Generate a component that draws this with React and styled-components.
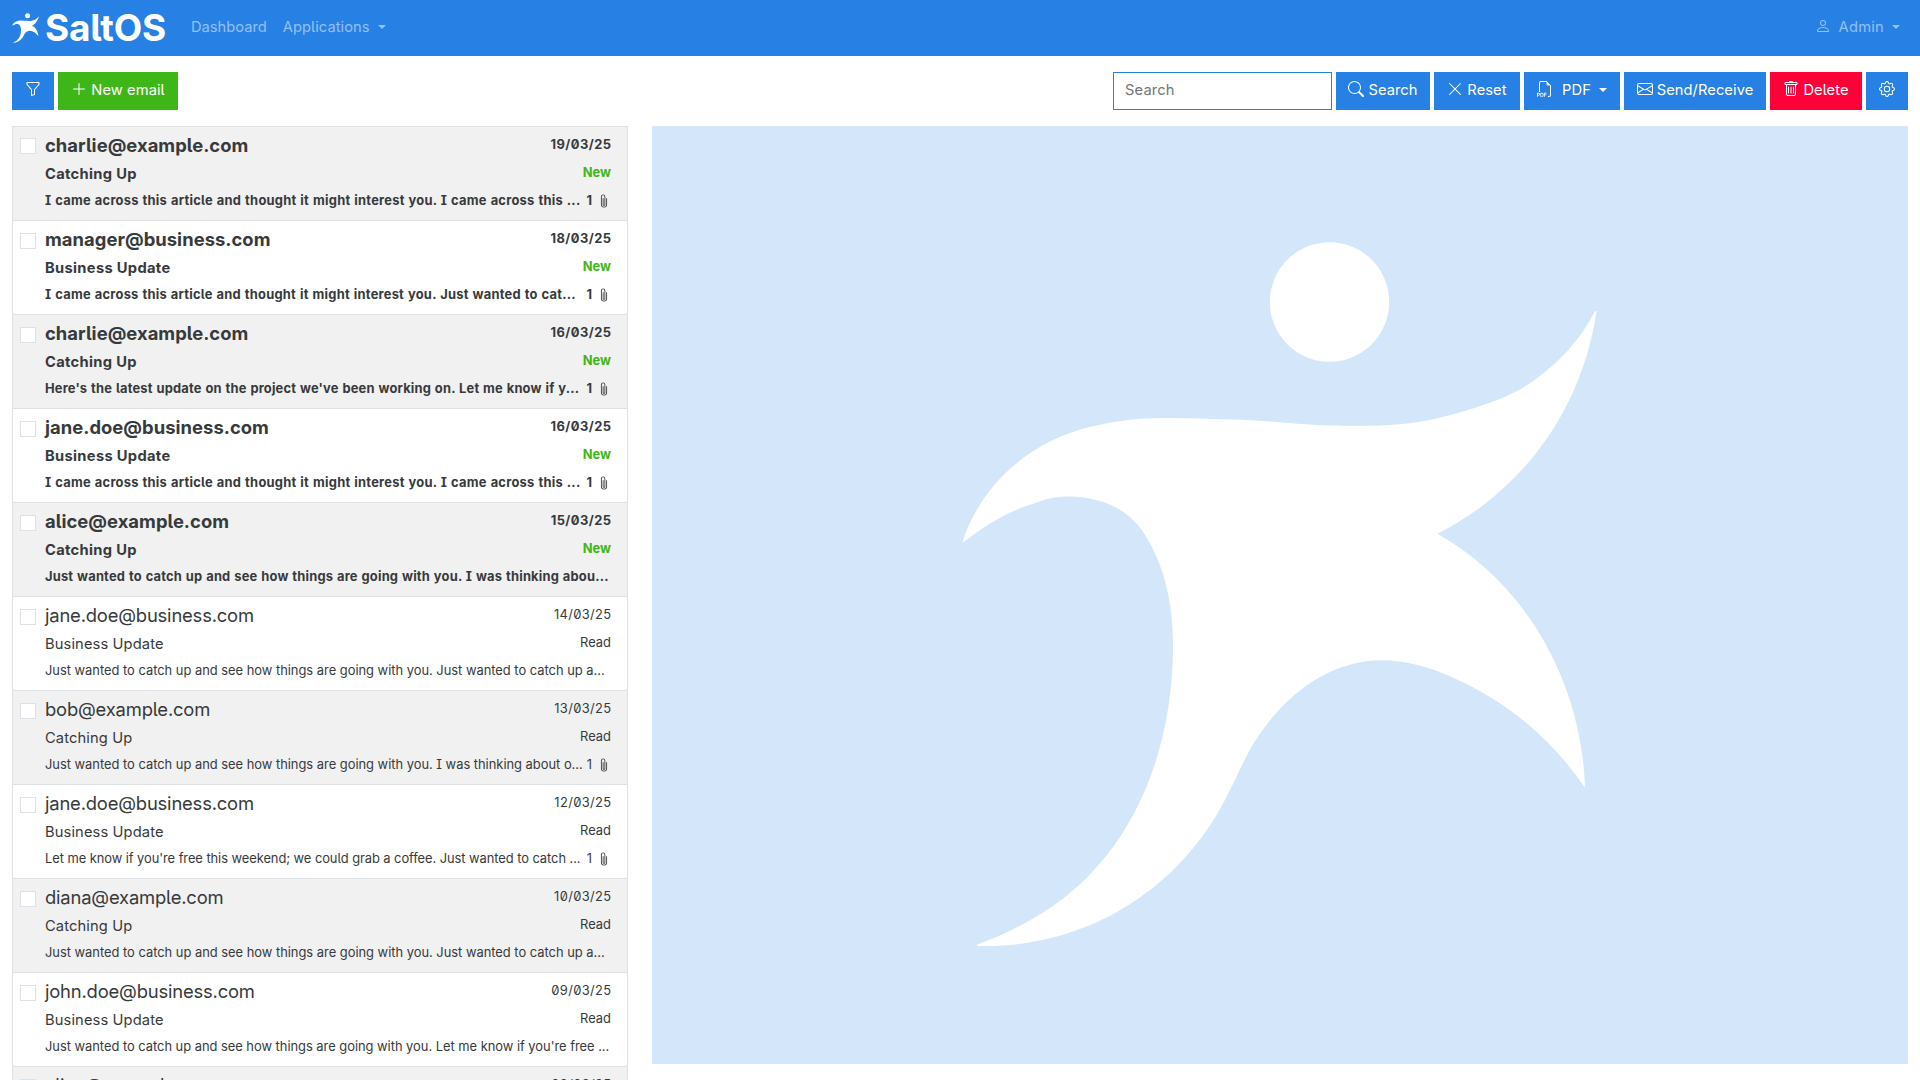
import React from 'react';
import styled, { createGlobalStyle } from 'styled-components';
import { BsFunnel, BsPlusLg, BsSearch, BsXLg, BsFiletypePdf, BsEnvelope, BsTrash, BsGear, BsPerson, BsPaperclip } from 'react-icons/bs';

const GlobalStyle = createGlobalStyle`
  *, *::before, *::after { box-sizing: border-box; }
  html, body { margin: 0; height: 100%; overflow: hidden; background: #fff; }
  body {
    font-family: Inter, "Liberation Sans", sans-serif;
    font-size: 14.7px;
    line-height: 24px;
    color: #373a3c;
    font-feature-settings: "zero", "cv05", "cv08";
  }
`;

const Page = styled.div`
  height: 1080px;
  overflow: hidden;
`;

const Navbar = styled.nav`
  display: flex;
  align-items: center;
  height: 56px;
  padding: 0 12px;
  background: #2780e3;
`;

const Brand = styled.div`
  display: flex;
  align-items: center;
  width: 171px;
  height: 56px;
  color: #fff;
`;

const BrandMark = styled.svg`
  width: 27px;
  height: 30px;
  margin-right: 6px;
  flex: none;
`;

const BrandName = styled.span`
  font-size: 37px;
  line-height: 56px;
  font-weight: 700;
  letter-spacing: -0.2px;
`;

const NavLink = styled.a`
  display: flex;
  align-items: center;
  height: 40px;
  padding: 0 8px;
  margin-top: -2px;
  color: rgba(255, 255, 255, 0.5);
  letter-spacing: ${(p) => p.$track || 0}px;
  white-space: nowrap;
  svg { margin-right: 8px; width: 16px; height: 16px; margin-top: -2px; }
`;

const Spacer = styled.div`
  flex: 1;
`;

const Caret = styled.span`
  margin-left: 8px;
  border-top: 4.8px solid currentColor;
  border-left: 4.8px solid transparent;
  border-right: 4.8px solid transparent;
`;

const Toolbar = styled.div`
  display: flex;
  gap: 4px;
  padding: 16px 12px;
`;

const colours = { primary: '#2780e3', success: '#3fb618', danger: '#ff0039' };

const Button = styled.button`
  display: flex;
  align-items: center;
  justify-content: center;
  width: ${(p) => p.$width}px;
  height: 38px;
  padding: 0 0 2px;
  border: 0;
  background: ${(p) => colours[p.$tone || 'primary']};
  color: #fff;
  font: inherit;
  font-feature-settings: inherit;
  letter-spacing: 0.07px;
  white-space: nowrap;
  svg { width: 16px; height: 16px; margin-top: -2px; flex: none; }
`;

const Label = styled.span`
  margin-left: ${(p) => p.$gap || 4}px;
`;

const SearchInput = styled.input`
  width: 219px;
  height: 38px;
  padding: 0 12px 2px 11px;
  border: 1px solid #2780e3;
  border-radius: 0;
  font: inherit;
  letter-spacing: 0.15px;
  outline: 0;
  &::placeholder { color: #737576; opacity: 1; }
`;

const Content = styled.main`
  display: flex;
  align-items: flex-start;
  gap: 24px;
  padding: 0 12px;
`;

const MailList = styled.div`
  width: 616px;
  flex: none;
  border: 1px solid #dee2e6;
`;

const Checkbox = styled.span`
  width: 16px;
  height: 16px;
  margin: 12px 9px 0 0;
  flex: none;
  background: #fff;
  border: 1px solid #dee2e6;
`;

const MailBody = styled.div`
  flex: 1;
  min-width: 0;
`;

const Line = styled.div`
  display: flex;
  justify-content: space-between;
  height: ${(p) => p.$height}px;
  white-space: nowrap;
`;

const Sender = styled.span`
  font-size: 18.4px;
  line-height: 36px;
  letter-spacing: -0.18px;
`;

const Subject = styled.span`
  line-height: 23px;
  letter-spacing: 0.12px;
`;

const Meta = styled.span`
  font-size: 12.9px;
  line-height: 20px;
  color: ${(p) => (p.$fresh ? '#3fb618' : 'inherit')};
`;

const MailDate = styled(Meta)`
  line-height: 36px;
  letter-spacing: 0.35px;
  margin-right: -0.35px;
`;

const Preview = styled.span`
  font-size: 12.9px;
  line-height: 36px;
  letter-spacing: ${(p) => p.$track}px;
`;

const Attachment = styled.span`
  display: flex;
  align-items: center;
  gap: 5px;
  font-size: 12.9px;
  height: 36px;
  svg { width: 14px; height: 14px; }
`;

const MailRow = styled.article`
  display: flex;
  height: 94px;
  padding: 0 16px 0 7px;
  border-bottom: 1px solid #dee2e6;
  background: ${(p) => (p.$shaded ? '#f1f1f1' : '#fff')};
  font-weight: ${(p) => (p.$unread ? 700 : 400)};

  &:first-child ${Checkbox} { margin-top: 11px; }
  ${Sender} { ${(p) => p.$unread && 'letter-spacing: 0.04px;'} }
  ${Subject} { ${(p) => p.$unread && 'letter-spacing: 0.32px;'} }
  ${MailDate} { ${(p) => p.$unread && 'letter-spacing: 0.45px; margin-right: -0.45px;'} }
  ${Preview} { ${(p) => p.$unread && 'word-spacing: 0.6px;'} }
`;

const DetailPane = styled.section`
  flex: 1;
  height: 938px;
  background: #d4e6f9;
`;

const Splash = styled.svg`
  display: block;
  width: 1256px;
  height: 938px;
`;

// Outline of the runner, clockwise from the left hand.
const figurePath = [
  'M962.5 542C980 487 1027 441 1094 426C1120 420 1140 418.2 1162 418C1190 418 1210 419 1230 419.5',
  'C1262 420 1285 423 1306 424.3C1325 425.5 1340 425.8 1355 425.8C1385 426 1412 424 1435.5 418.7',
  'C1475 409 1512 397 1534 380.5C1558 363 1580 341 1595 311L1596.5 311',
  'C1587 378 1556 436 1514 478C1491 501 1468 518 1437.5 533.8',
  'C1530 586 1582 687 1585 787.7',
  'C1550 737 1507 702 1453.4 677.8C1430 667 1405 660.3 1382 660.3C1330 660.3 1284 694 1252.5 745',
  'C1240 767 1232 790 1212 822.6C1152 914 1058 949 977 945.8L976.5 944.8',
  'C1010 933 1042 915 1065 897C1135 842 1173 750 1173 645C1173 600 1163 560 1141 529',
  'C1130 514 1114 504.5 1098.5 500.8C1080 495 1055 495 1038 502.2C1010 510 985 525 963 542.5Z',
].join('');

function Figure() {
  return (
    <>
      <circle cx="1329.5" cy="302" r="59.7" fill="#fff" />
      <path d={figurePath} fill="#fff" />
    </>
  );
}

const came = 'I came across this article and thought it might interest you. ';
const just = 'Just wanted to catch up and see how things are going with you. ';

const mails = [
  { from: 'charlie@example.com', date: '19/03/25', subject: 'Catching Up', text: came + 'I came across this ...', files: 1, unread: true, track: 0.25 },
  { from: 'manager@business.com', date: '18/03/25', subject: 'Business Update', text: came + 'Just wanted to cat...', files: 1, unread: true, track: 0.24 },
  { from: 'charlie@example.com', date: '16/03/25', subject: 'Catching Up', text: "Here's the latest update on the project we've been working on. Let me know if y...", files: 1, unread: true, track: 0.18 },
  { from: 'jane.doe@business.com', date: '16/03/25', subject: 'Business Update', text: came + 'I came across this ...', files: 1, unread: true, track: 0.25 },
  { from: 'alice@example.com', date: '15/03/25', subject: 'Catching Up', text: just + 'I was thinking abou...', unread: true, track: 0.19 },
  { from: 'jane.doe@business.com', date: '14/03/25', subject: 'Business Update', text: just + 'Just wanted to catch up a...' },
  { from: 'bob@example.com', date: '13/03/25', subject: 'Catching Up', text: just + 'I was thinking about o...', files: 1 },
  { from: 'jane.doe@business.com', date: '12/03/25', subject: 'Business Update', text: "Let me know if you're free this weekend; we could grab a coffee. Just wanted to catch ...", files: 1, track: -0.06 },
  { from: 'diana@example.com', date: '10/03/25', subject: 'Catching Up', text: just + 'Just wanted to catch up a...' },
  { from: 'john.doe@business.com', date: '09/03/25', subject: 'Business Update', text: just + "Let me know if you're free ...", track: -0.02 },
  { from: 'alice@example.com', date: '08/03/25', subject: 'Catching Up', text: just },
];

export default function App() {
  return (
    <Page>
      <GlobalStyle />
      <Navbar>
        <Brand>
          <BrandMark viewBox="958 238 643 712"><Figure /></BrandMark>
          <BrandName>SaltOS</BrandName>
        </Brand>
        <NavLink>Dashboard</NavLink>
        <NavLink $track={0.06}>Applications<Caret /></NavLink>
        <Spacer />
        <NavLink $track={0.25}><BsPerson />Admin<Caret /></NavLink>
      </Navbar>
      <Toolbar>
        <Button $width={42}><BsFunnel /></Button>
        <Button $width={120} $tone="success"><BsPlusLg /><Label>New email</Label></Button>
        <Spacer />
        <SearchInput placeholder="Search" />
        <Button $width={94}><BsSearch /><Label>Search</Label></Button>
        <Button $width={86}><BsXLg /><Label>Reset</Label></Button>
        <Button $width={96}><BsFiletypePdf /><Label $gap={9}>PDF</Label><Caret /></Button>
        <Button $width={142}><BsEnvelope /><Label>Send/Receive</Label></Button>
        <Button $width={92} $tone="danger"><BsTrash /><Label>Delete</Label></Button>
        <Button $width={42}><BsGear /></Button>
      </Toolbar>
      <Content>
        <MailList>
          {mails.map((m, i) => (
            <MailRow key={i} $shaded={i % 2 === 0} $unread={m.unread}>
              <Checkbox />
              <MailBody>
                <Line $height={36}><Sender>{m.from}</Sender><MailDate>{m.date}</MailDate></Line>
                <Line $height={20}><Subject>{m.subject}</Subject><Meta $fresh={m.unread}>{m.unread ? 'New' : 'Read'}</Meta></Line>
                <Line $height={36}>
                  <Preview $track={m.track ?? -0.01}>{m.text}</Preview>
                  {m.files && <Attachment>{m.files}<BsPaperclip /></Attachment>}
                </Line>
              </MailBody>
            </MailRow>
          ))}
        </MailList>
        <DetailPane>
          <Splash viewBox="652 126 1256 938"><Figure /></Splash>
        </DetailPane>
      </Content>
    </Page>
  );
}
